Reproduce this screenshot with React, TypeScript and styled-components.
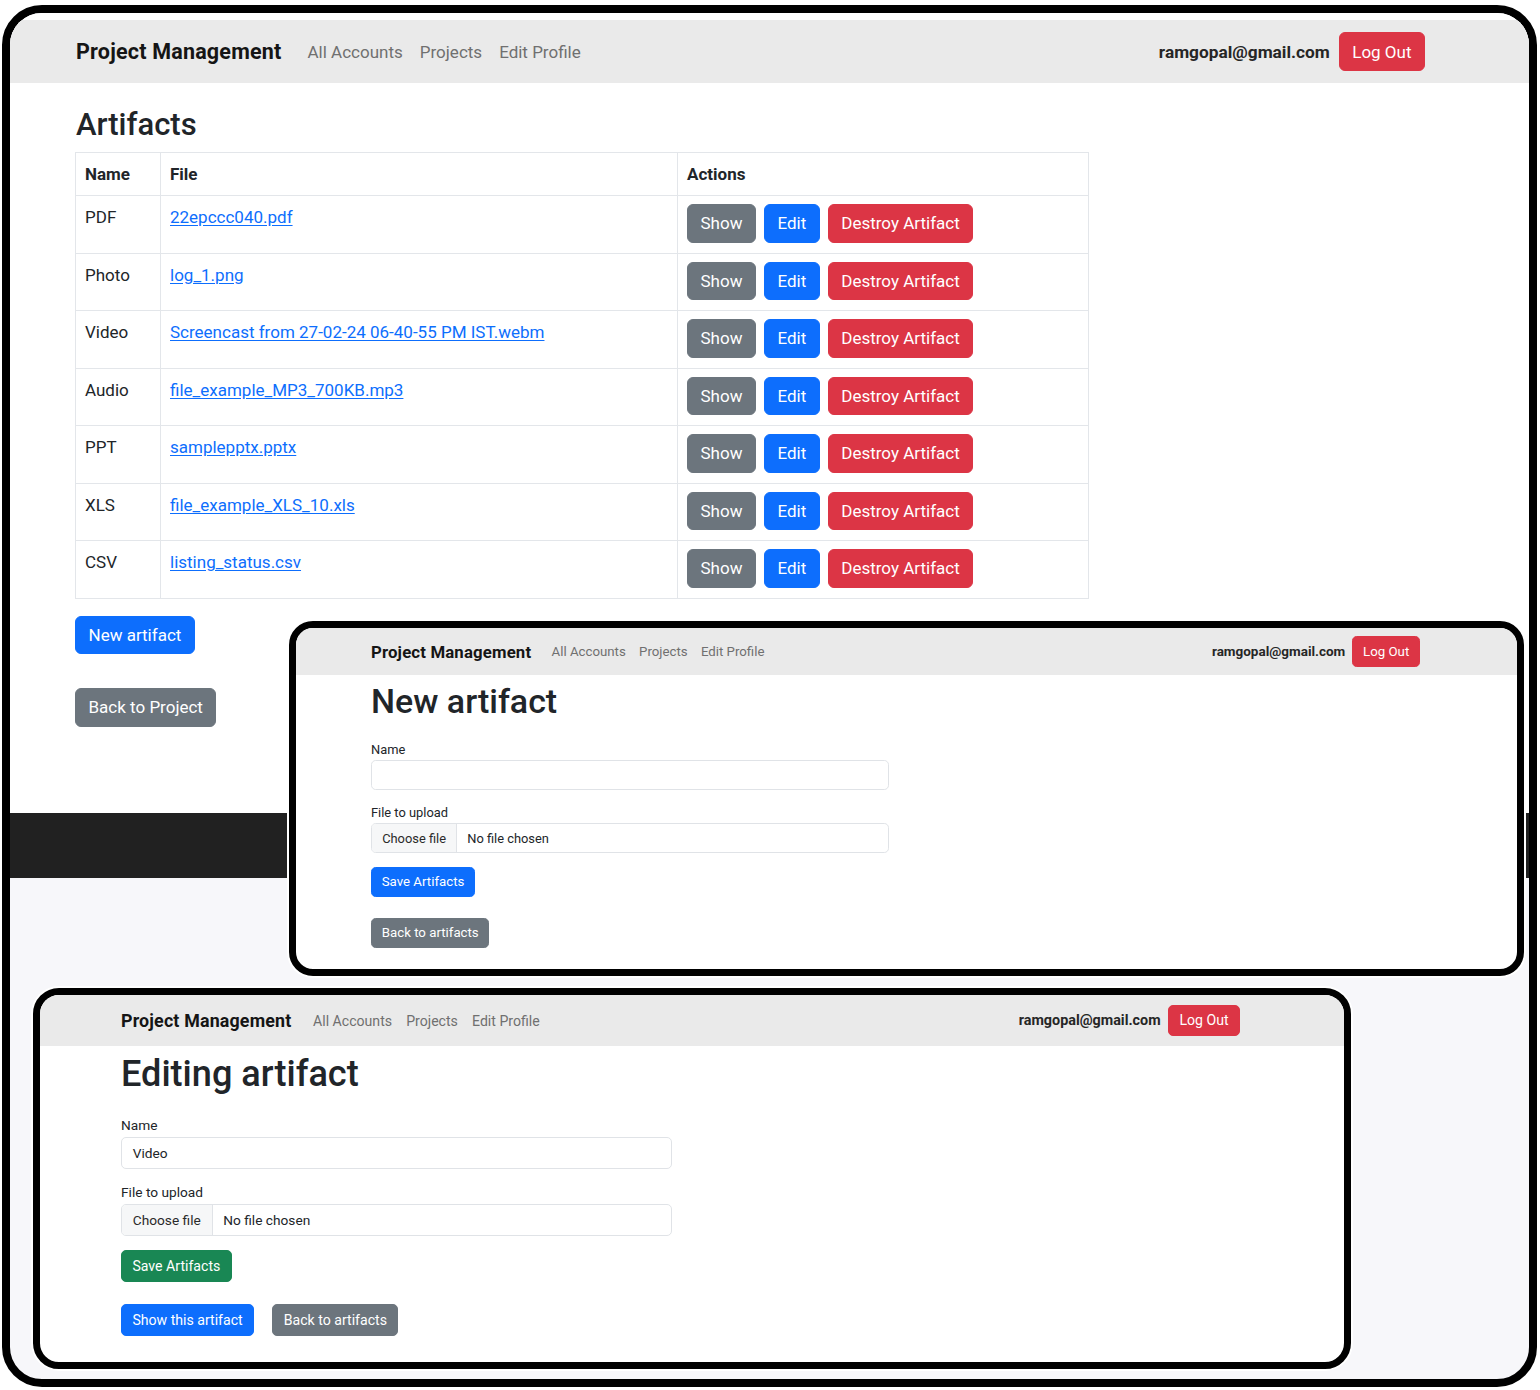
import React from "react";
import styled, { createGlobalStyle, css } from "styled-components";

const FONT = `Roboto, "Noto Sans", "Liberation Sans", sans-serif`;

const Global = createGlobalStyle`
  html, body { margin: 0; padding: 0; background: #ffffff; }
  body { font-family: ${FONT}; color: #212529; }
  * { box-sizing: border-box; }
`;

const Canvas = styled.div`
  position: relative;
  width: 1540px;
  height: 1390px;
  padding: 5px 3px 3px 2px;
  background: #ffffff;
  overflow: hidden;
`;

const OuterFrame = styled.div`
  width: 1535px;
  height: 1382px;
  border: 8px solid #000;
  border-radius: 40px;
  overflow: hidden;
  background: #f7f7fa;
  display: flex;
  flex-direction: column;
`;

const MainPage = styled.div`
  background: #ffffff;
  padding-top: 7px;
  flex-shrink: 0;
  display: flex;
  flex-direction: column;
`;

const NavBar = styled.nav<{ $h: number; $pl: number; $pr: number }>`
  height: ${(p) => p.$h}px;
  flex-shrink: 0;
  background: #eaeaea;
  display: flex;
  align-items: center;
  padding: 0 ${(p) => p.$pr}px 0 ${(p) => p.$pl}px;
`;

const Brand = styled.span<{ $s: number }>`
  font-weight: 700;
  font-size: ${(p) => 21.5 * p.$s}px;
  letter-spacing: ${(p) => 0.2 * p.$s}px;
  color: #151515;
  margin-right: ${(p) => 26 * p.$s}px;
  white-space: nowrap;
`;

const NavLink = styled.a<{ $s: number }>`
  font-size: ${(p) => 17 * p.$s}px;
  color: #707070;
  text-decoration: none;
  margin-right: ${(p) => 17 * p.$s}px;
  white-space: nowrap;
`;

const NavRight = styled.div<{ $s: number }>`
  margin-left: auto;
  display: flex;
  align-items: center;
  gap: ${(p) => 9 * p.$s}px;
`;

const Email = styled.span<{ $s: number }>`
  font-weight: 700;
  font-size: ${(p) => 17.3 * p.$s}px;
  color: #262626;
  white-space: nowrap;
`;

type Variant = "primary" | "secondary" | "danger" | "success";
const COLORS: Record<Variant, string> = {
  primary: "#0d6efd",
  secondary: "#6c757d",
  danger: "#dc3545",
  success: "#198754",
};

const Button = styled.button<{ $v: Variant; $s: number }>`
  display: inline-flex;
  align-items: center;
  justify-content: center;
  height: ${(p) => 38.5 * p.$s}px;
  padding: 0 ${(p) => 12.5 * p.$s}px;
  border: 1px solid ${(p) => COLORS[p.$v]};
  border-radius: ${(p) => 6 * p.$s}px;
  background: ${(p) => COLORS[p.$v]};
  color: #ffffff;
  font-family: ${FONT};
  font-size: ${(p) => 17 * p.$s}px;
  white-space: nowrap;
  cursor: pointer;
`;

const Content = styled.main`
  height: 730px;
  padding: 23px 0 0 65px;
  display: flex;
  flex-direction: column;
  align-items: flex-start;
`;

const PageTitle = styled.h1`
  margin: 0 0 8px 1px;
  font-size: 31px;
  font-weight: 500;
  line-height: 38px;
  color: #212529;
`;

const Table = styled.table`
  width: 1013px;
  border-collapse: collapse;
  table-layout: fixed;
  font-size: 17px;
  line-height: 24px;
  color: #212529;
`;

const Th = styled.th`
  text-align: left;
  font-weight: 700;
  padding: 9px;
  border: 1px solid #e3e6ea;
`;

const Td = styled.td`
  vertical-align: top;
  padding: 9px;
  border: 1px solid #e3e6ea;
  height: 57.5px;
`;

const FileLink = styled.a`
  color: #0d6efd;
  text-decoration: underline;
  text-underline-offset: 2px;
`;

const Actions = styled.div`
  display: flex;
  gap: 8px;
  margin-top: -1px;
`;

const FooterBand = styled.div`
  height: 65px;
  background: #212121;
`;

const PageButtons = styled.div`
  margin-top: 17px;
  display: flex;
  flex-direction: column;
  align-items: flex-start;
  gap: 34px;
`;

/* ---------- overlaid screenshots ---------- */

const Window = styled.div<{ $x: number; $y: number; $w: number; $h: number; $r: number }>`
  position: absolute;
  left: ${(p) => p.$x}px;
  top: ${(p) => p.$y}px;
  width: ${(p) => p.$w}px;
  height: ${(p) => p.$h}px;
  border: 7px solid #000;
  border-radius: ${(p) => p.$r}px;
  overflow: hidden;
  background: #ffffff;
  box-shadow: 0 0 0 2px #ffffff;
  display: flex;
  flex-direction: column;
`;

const FormBody = styled.div<{ $pl: number }>`
  padding-left: ${(p) => p.$pl}px;
  display: flex;
  flex-direction: column;
  align-items: flex-start;
`;

const FormTitle = styled.h1<{ $s: number }>`
  margin: ${(p) => 9 * p.$s}px 0 0;
  font-size: ${(p) => 43.5 * p.$s}px;
  line-height: 1.2;
  font-weight: 500;
  color: #212529;
`;

const Label = styled.label<{ $s: number; $gap: number }>`
  display: block;
  margin-top: ${(p) => p.$gap * p.$s}px;
  margin-bottom: ${(p) => 1 * p.$s}px;
  font-size: ${(p) => 16.5 * p.$s}px;
  line-height: 1.5;
  color: #212529;
`;

const fieldBox = css<{ $s: number }>`
  width: ${(p) => 664 * p.$s}px;
  height: ${(p) => 38.5 * p.$s}px;
  border: 1px solid #e0e3e7;
  border-radius: ${(p) => 6 * p.$s}px;
  font-size: ${(p) => 16.5 * p.$s}px;
  color: #212529;
  background: #ffffff;
`;

const TextField = styled.div<{ $s: number }>`
  ${fieldBox};
  display: flex;
  align-items: center;
  padding: 0 ${(p) => 13 * p.$s}px;
`;

const FileField = styled.div<{ $s: number }>`
  ${fieldBox};
  display: flex;
  align-items: stretch;
  overflow: hidden;
`;

const ChooseFile = styled.span<{ $s: number }>`
  display: flex;
  align-items: center;
  padding: 0 ${(p) => 13 * p.$s}px;
  background: #f6f7f8;
  border-right: 1px solid #e0e3e7;
  color: #2a2a2a;
`;

const NoFile = styled.span<{ $s: number }>`
  display: flex;
  align-items: center;
  padding-left: ${(p) => 13 * p.$s}px;
`;

const SaveRow = styled.div<{ $s: number }>`
  margin-top: ${(p) => 17.5 * p.$s}px;
`;

const BackRow = styled.div<{ $s: number }>`
  margin-top: ${(p) => 26.5 * p.$s}px;
  display: flex;
  gap: ${(p) => 22 * p.$s}px;
`;

function TopNav({ s, h, pl, pr }: { s: number; h: number; pl: number; pr: number }) {
  return (
    <NavBar $h={h} $pl={pl} $pr={pr}>
      <Brand $s={s}>Project Management</Brand>
      <NavLink $s={s}>All Accounts</NavLink>
      <NavLink $s={s}>Projects</NavLink>
      <NavLink $s={s}>Edit Profile</NavLink>
      <NavRight $s={s}>
        <Email $s={s}>ramgopal@gmail.com</Email>
        <Button $v="danger" $s={s}>
          Log Out
        </Button>
      </NavRight>
    </NavBar>
  );
}

const artifacts = [
  { name: "PDF", file: "22epccc040.pdf" },
  { name: "Photo", file: "log_1.png" },
  { name: "Video", file: "Screencast from 27-02-24 06-40-55 PM IST.webm" },
  { name: "Audio", file: "file_example_MP3_700KB.mp3" },
  { name: "PPT", file: "samplepptx.pptx" },
  { name: "XLS", file: "file_example_XLS_10.xls" },
  { name: "CSV", file: "listing_status.csv" },
];

type FormProps = {
  s: number;
  pl: number;
  title: string;
  value?: string;
  editing?: boolean;
};

function ArtifactForm({ s, pl, title, value, editing }: FormProps) {
  return (
    <FormBody $pl={pl}>
      <FormTitle $s={s}>{title}</FormTitle>
      <Label $s={s} $gap={22.5}>
        Name
      </Label>
      <TextField $s={s}>{value}</TextField>
      <Label $s={s} $gap={16.5}>
        File to upload
      </Label>
      <FileField $s={s}>
        <ChooseFile $s={s}>Choose file</ChooseFile>
        <NoFile $s={s}>No file chosen</NoFile>
      </FileField>
      <SaveRow $s={s}>
        <Button $v={editing ? "success" : "primary"} $s={s}>
          Save Artifacts
        </Button>
      </SaveRow>
      <BackRow $s={s}>
        {editing && (
          <Button $v="primary" $s={s}>
            Show this artifact
          </Button>
        )}
        <Button $v="secondary" $s={s}>
          Back to artifacts
        </Button>
      </BackRow>
    </FormBody>
  );
}

export default function App() {
  return (
    <>
      <Global />
      <Canvas>
        <OuterFrame>
          <MainPage>
            <TopNav s={1} h={63} pl={66} pr={104} />
            <Content>
              <PageTitle>Artifacts</PageTitle>
              <Table>
                <colgroup>
                  <col style={{ width: 85 }} />
                  <col style={{ width: 517 }} />
                  <col style={{ width: 411 }} />
                </colgroup>
                <thead>
                  <tr>
                    <Th>Name</Th>
                    <Th>File</Th>
                    <Th>Actions</Th>
                  </tr>
                </thead>
                <tbody>
                  {artifacts.map((a) => (
                    <tr key={a.name}>
                      <Td>{a.name}</Td>
                      <Td>
                        <FileLink href="#">{a.file}</FileLink>
                      </Td>
                      <Td>
                        <Actions>
                          <Button $v="secondary" $s={1}>
                            Show
                          </Button>
                          <Button $v="primary" $s={1}>
                            Edit
                          </Button>
                          <Button $v="danger" $s={1}>
                            Destroy Artifact
                          </Button>
                        </Actions>
                      </Td>
                    </tr>
                  ))}
                </tbody>
              </Table>
              <PageButtons>
                <Button $v="primary" $s={1}>
                  New artifact
                </Button>
                <Button $v="secondary" $s={1}>
                  Back to Project
                </Button>
              </PageButtons>
            </Content>
            <FooterBand />
          </MainPage>
        </OuterFrame>

        <Window $x={289} $y={621} $w={1235} $h={355} $r={24}>
          <TopNav s={0.78} h={47} pl={75} pr={97} />
          <ArtifactForm s={0.78} pl={75} title="New artifact" />
        </Window>

        <Window $x={33} $y={988} $w={1318} $h={381} $r={26}>
          <TopNav s={0.83} h={51} pl={81} pr={104} />
          <ArtifactForm s={0.83} pl={81} title="Editing artifact" value="Video" editing />
        </Window>
      </Canvas>
    </>
  );
}
